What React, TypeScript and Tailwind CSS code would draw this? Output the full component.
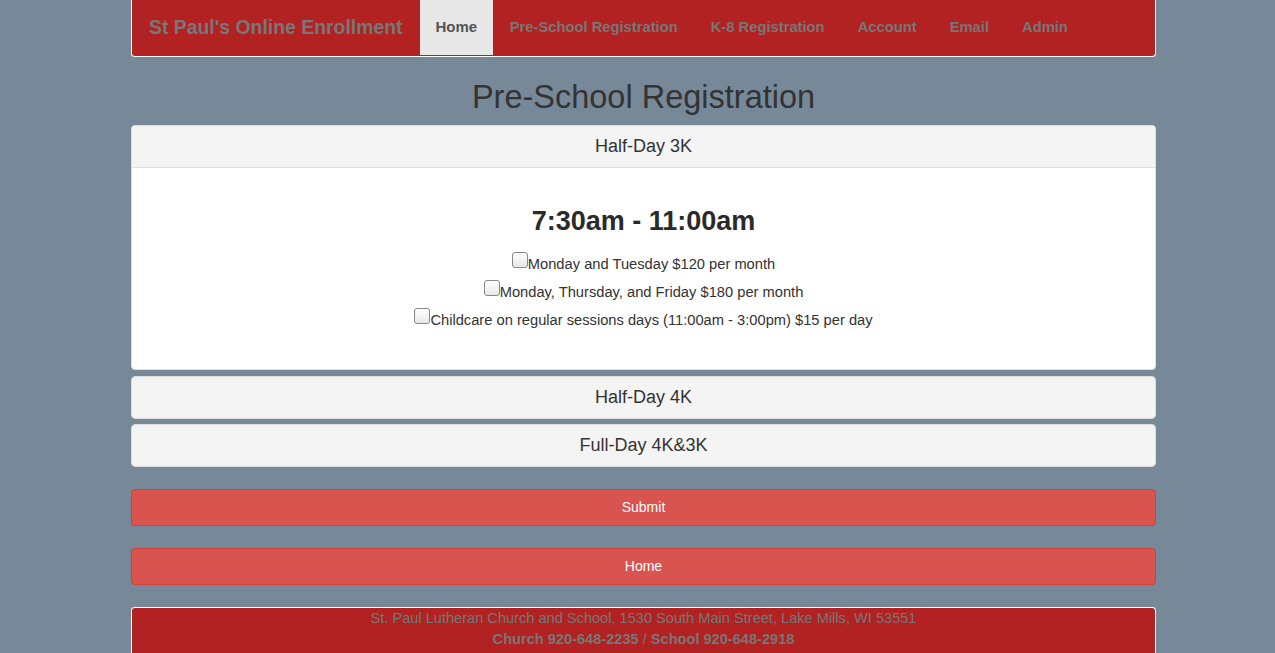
import React from "react";

const navLinks = ["Pre-School Registration", "K-8 Registration", "Account", "Email", "Admin"];

const options = [
  "Monday and Tuesday $120 per month",
  "Monday, Thursday, and Friday $180 per month",
  "Childcare on regular sessions days (11:00am - 3:00pm) $15 per day",
];

function PanelHeading({ title, open }: { title: string; open?: boolean }) {
  return (
    <div
      className={
        "h-[41px] flex items-center justify-center bg-[#f4f4f4] text-[18px] text-[#333] " +
        (open ? "h-[42px] border-b border-[#ddd]" : "")
      }
    >
      {title}
    </div>
  );
}

export default function App() {
  return (
    <div className="min-h-[653px] bg-[#778899] font-['Liberation_Sans',Arial,sans-serif] text-[14px] text-[#333]">
      <div className="ml-[131px] w-[1025px]">
        {/* Navbar */}
        <nav className="h-[57px] flex items-start bg-[#b22222] border border-t-0 border-white rounded-b-[4px]">
          <div className="pl-[17px] pr-[17px] h-[55px] flex items-center text-[19.4px] font-bold text-[#777]">
            St Paul's Online Enrollment
          </div>
          <div className="flex">
            <a className="h-[55px] px-[16px] flex items-center bg-[#e7e7e7] text-[#555] font-bold text-[15px]">Home</a>
            {navLinks.map((l) => (
              <a key={l} className="h-[55px] px-[16.5px] flex items-center text-[#777] font-bold text-[14.75px]">
                {l}
              </a>
            ))}
          </div>
        </nav>

        <h1 className="text-center text-[32.5px] leading-[1.1] mt-[23px] mb-[9px] text-[#333]">Pre-School Registration</h1>

        {/* Open panel */}
        <div className="bg-white border border-[#ddd] rounded-[4px] overflow-hidden">
          <PanelHeading title="Half-Day 3K" open />
          <div className="pt-[39px] pb-[39px] text-center">
            <h2 className="text-[27px] font-bold leading-[1.1] mb-[18px] text-[#2a2a2a]">7:30am - 11:00am</h2>
            <div className="flex flex-col items-center gap-[8px] text-[14.7px]">
              {options.map((o) => (
                <label key={o} className="flex items-center leading-[20px]">
                  <input type="checkbox" className="w-[16px] h-[16px] -mt-[8px] mr-0 appearance-none border border-[#888] rounded-[3px] bg-gradient-to-b from-white to-[#e8e8e8]" />
                  {o}
                </label>
              ))}
            </div>
          </div>
        </div>

        <div className="mt-[6px] border border-[#ddd] rounded-[4px] overflow-hidden">
          <PanelHeading title="Half-Day 4K" />
        </div>
        <div className="mt-[5px] border border-[#ddd] rounded-[4px] overflow-hidden">
          <PanelHeading title="Full-Day 4K&3K" />
        </div>

        <button className="mt-[22px] w-full h-[37px] bg-[#d9534f] border border-[#d43f3a] rounded-[4px] text-white text-[14px]">
          Submit
        </button>
        <button className="mt-[22px] w-full h-[37px] bg-[#d9534f] border border-[#d43f3a] rounded-[4px] text-white text-[14px]">
          Home
        </button>

        <footer className="mt-[22px] h-[60px] bg-[#b22222] border border-b-0 border-white rounded-t-[4px] text-center text-[#777]">
          <p className="text-[14.6px] leading-[20px]">
            St. Paul Lutheran Church and School, 1530 South Main Street, Lake Mills, WI 53551
          </p>
          <p className="text-[14.6px] leading-[22px]">
            <b>Church 920-648-2235</b> / <b>School 920-648-2918</b>
          </p>
        </footer>
      </div>
    </div>
  );
}
